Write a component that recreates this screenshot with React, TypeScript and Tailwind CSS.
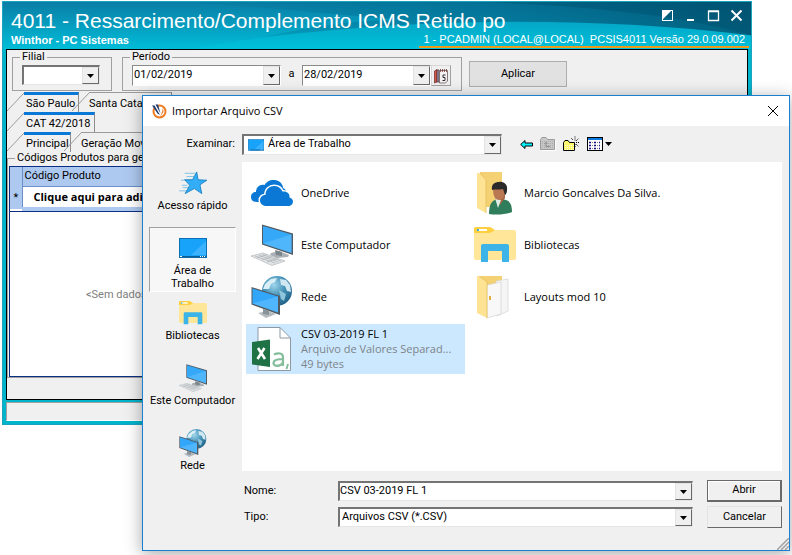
import React, { useState } from "react";
import clsx from "clsx";

type IconProps = { className?: string };

const StarIcon = ({ className }: IconProps) => (
  <svg viewBox="0 0 32 26" className={className} aria-hidden="true">
    <g stroke="#6bb9e4" strokeWidth="0.9">
      <path d="M7 2.500h11M9 6h8M3 10h10M5 18h6M1 21.500h9M4 15.500h6" />
    </g>
    <path
      d="M20 1 L21.500 9.500 L31 10 L23.500 15 L25.500 24.500 L17.500 19 L7.500 24.500 L12.500 15.500 L7 9.500 L15.500 9.500 Z"
      fill="#33adf5"
      stroke="#1a83c6"
      strokeWidth="1"
    />
  </svg>
);

const DesktopIcon = ({ className }: IconProps) => (
  <svg viewBox="0 0 28 20" className={className} aria-hidden="true">
    <rect x="0.5" y="0.5" width="27" height="19" fill="#18a3fb" stroke="#0c6fb4" />
    <path d="M12 17 L27 3 V17 Z" fill="#3bb2ff" />
    <path d="M1 18.500h26" stroke="#0d5d94" />
    <path d="M1 18.500h2M21 18.500h1M23 18.500h1M25 18.500h1" stroke="#fff" />
  </svg>
);

const LibraryIcon = ({ className }: IconProps) => (
  <svg viewBox="0 0 42 36" className={className} aria-hidden="true">
    <path d="M0 2 q0-2 2-2 H16 L20 3 H40 q2 0 2 2 V31 q0 2-2 2 H2 q-2 0-2-2 Z" fill="#ffe699" />
    <path d="M0 6 V2 q0-2 2-2 H16 L21 3 L16 6 Z" fill="#ffcf40" />
    <rect x="3" y="2" width="10" height="2" fill="#fff" />
    <rect x="3" y="2" width="2" height="2" fill="#35b3e8" />
    <path d="M7 35 V19 q0-2 2-2 H33 q2 0 2 2 V35 H28 V24 H14 V35 Z" fill="#3cb4e7" />
  </svg>
);

const ComputerIcon = ({ className }: IconProps) => (
  <svg viewBox="0 0 44 42" className={className} aria-hidden="true">
    <path d="M21 29 L29 27 L39 31 L38 33 L27 34 L20 31 Z" fill="#aab0b5" />
    <path d="M25 26 L32 28 V32 L26 31 Z" fill="#7b858c" />
    <path d="M12 0.500 L43 9.500 V31 L12 20.500 Z" fill="#525b63" />
    <path d="M13 2 L41.500 10.500 V29 L13 19.500 Z" fill="#35a9f8" />
    <path d="M13 19.500 L41.500 10.500 V29 Z" fill="#62c0ff" opacity="0.6" />
    <path d="M1 32 L13 29 L35 37 L22 41.500 Z" fill="#e2e5e7" stroke="#b4b8bb" strokeWidth="0.7" />
    <path
      d="M5 32 L25 39 M8.500 31 L28 38 M12 30.500 L31 37 M7 34 L17 30.500 M12 36 L22 32.500 M17 38 L27 34.500"
      stroke="#b2b6ba"
      strokeWidth="0.8"
    />
  </svg>
);

const NetworkIcon = ({ className }: IconProps) => (
  <svg viewBox="0 0 42 42" className={className} aria-hidden="true">
    <defs>
      <radialGradient id="globe" cx="0.4" cy="0.3" r="0.75">
        <stop offset="0" stopColor="#9fd6ec" />
        <stop offset="0.5" stopColor="#4390b5" />
        <stop offset="1" stopColor="#1f5e84" />
      </radialGradient>
    </defs>
    <circle cx="26" cy="15" r="15" fill="url(#globe)" />
    <path d="M14 8 L20 3 L26 2 L24 6 L20 8 L18 13 L12 13 Z" fill="#d9eef5" />
    <path d="M29 3 L35 4 L39 9 L40 16 L36 15 L34 10 L30 9 Z" fill="#cfe8f1" />
    <path d="M28 14 L35 18 L33 25 L30 23 Z" fill="#8fc5da" />
    <path d="M7 37 L17 35 L25 38 L15 42 Z" fill="#b4babf" />
    <path d="M12 33 L18 35 V39 L12 38 Z" fill="#89939a" />
    <path d="M0.500 11 L29 20 V39 L0.500 28.500 Z" fill="#525b63" />
    <path d="M1.500 12.500 L27 20.500 V36.500 L1.500 27.500 Z" fill="#32a6f8" />
    <path d="M1.500 27.500 L27 20.500 V36.500 Z" fill="#63c0ff" opacity="0.6" />
  </svg>
);

const OneDriveIcon = ({ className }: IconProps) => (
  <svg viewBox="0 0 42 26" className={className} aria-hidden="true">
    <path
      d="M6 22 C2 22 0 20 0 17 C0 14 2 12 5 12 C5 7 9 4 13.500 5 C16 0 24 -2 29 2 C31 4 32 6 32 8 C36 10 37 13 37 18 L12 22 Z"
      fill="#0a78d4"
    />
    <path
      d="M16 26 C12 26 9 24 9 20.500 C9 17 11.500 15 14.500 15 C14.500 9 19 6 23 6 C27 6 30 8 31.500 11.500 C36 11 39 13.500 38.500 17.500 C41 18 42 20 42 21.500 C42 24 40 26 37.500 26 Z"
      fill="#0a78d4"
      stroke="#fff"
      strokeWidth="3"
      paintOrder="stroke"
    />
  </svg>
);

const UserFolderIcon = ({ className }: IconProps) => (
  <svg viewBox="0 0 36 43" className={className} aria-hidden="true">
    <path d="M3 0 H25 V35 H3 Z" fill="#f4d273" />
    <path d="M0 1 H2 L9 7 V41 L0 36 Z" fill="#ffe394" />
    <path d="M9 41 V8 L3 1" stroke="#e5bf58" strokeWidth="0.8" fill="none" />
    <path d="M12 42 C12 32 15 27 23 27 C31 27 35 30 35 40 C29 43 18 43 12 42 Z" fill="#2f7d5b" />
    <path d="M18 27 L23 33 L28 26 V21 H18 Z" fill="#a76543" />
    <path d="M18 26 L21 36 L24 28 Z" fill="#dceee6" />
    <path d="M16 16 C16 12 28 12 28 17 C28 24 26 28 22 28 C18 28 16 24 16 16 Z" fill="#b97852" />
    <path d="M15 18 C14 12 18 10 22 10 C27 9 31 13 30 18 C30 22 28 23 28 23 L26 17 C22 18 18 17 15 18 Z" fill="#2b2a2a" />
  </svg>
);

const FolderIcon = ({ className }: IconProps) => (
  <svg viewBox="0 0 36 43" className={className} aria-hidden="true">
    <path d="M3 0 H25 V36 H3 Z" fill="#f4d273" />
    <path d="M19 5 L31 3 V35 L20 40 Z" fill="#f5f5f5" stroke="#cfcfcf" strokeWidth="0.6" />
    <path d="M10 9 L24 6 V38 L10 42 Z" fill="#f8f8f8" stroke="#cfcfcf" strokeWidth="0.6" />
    <path d="M0 0 H2 L10 6 V42 L0 37 Z" fill="#ffe394" />
    <path d="M10 42 V6 L2 0" stroke="#e5bf58" strokeWidth="0.8" fill="none" />
    <rect x="12" y="20" width="2" height="4" fill="#e0b13c" />
  </svg>
);

const CsvIcon = ({ className }: IconProps) => (
  <svg viewBox="0 0 40 45" className={className} aria-hidden="true">
    <path d="M6 0.500 H28 L38.500 11 V43.500 H6 Z" fill="#fff" stroke="#8e99a6" />
    <path d="M28 0.500 V11 H38.500" fill="none" stroke="#8e99a6" />
    <path d="M0 15 L18 12.500 V40 L0 37.500 Z" fill="#1f7246" />
    <path d="M6 21 L13 32 M12.500 21 L5.500 32" stroke="#fff" strokeWidth="2.600" />
    <path
      d="M22 27.500 C26 25.500 31 26 31 30 V39 M31 32 C25 32 21.500 33 21.500 36 C21.500 40 28 40 31 35.500"
      fill="none"
      stroke="#83bd9b"
      strokeWidth="2.200"
    />
    <path d="M36 37 L34.500 42" stroke="#83bd9b" strokeWidth="2" />
  </svg>
);

const CalendarIcon = () => (
  <svg viewBox="0 0 16 16" className="size-4" aria-hidden="true">
    <path d="M1.500 3 L4 1.500 V14 L1.500 15 Z" fill="#d0574a" stroke="#6b2626" strokeWidth="0.7" />
    <path d="M4 2 H6 V14 H4 Z" fill="#7d9fb8" stroke="#6b2626" strokeWidth="0.7" />
    <path d="M6.500 2.500 H14.500 V13 L12.500 15 H6.500 Z" fill="#f6f1f1" stroke="#6a5a5a" strokeWidth="0.8" />
    <path d="M7.500 1v3M9.500 1v3M11.500 1v3M13.500 1v3" stroke="#7a3a3a" strokeWidth="0.8" />
    <path d="M12.500 7 H10 V9.500 H12 V12.500 H9.500" fill="none" stroke="#2f2f3a" />
  </svg>
);

const AppLogo = () => (
  <svg viewBox="0 0 16 16" className="size-4" aria-hidden="true">
    <circle cx="8.500" cy="8.500" r="6" fill="#fff" stroke="#ec7d23" strokeWidth="2" />
    <path d="M0 1 L6 1.500 L9.500 12 L7.500 11 Z" fill="#fff" />
    <path d="M1 2.500 L3.500 2.500 L9 12 L6.500 10.500 Z" fill="#1f3b73" />
    <path d="M4.500 1.500 L7 1.500 L9.500 10.500 Z" fill="#1f3b73" />
    <path d="M9 14 L11 9 L12 4.500 L12.500 9 Z" fill="#ec7d23" />
  </svg>
);

const BackIcon = () => (
  <svg viewBox="0 0 13 11" className="h-[11px] w-[13px]" aria-hidden="true">
    <path d="M0.700 5.500 L5 1.500 V4 H12.500 V7 H5 V9.500 Z" fill="#00f5ff" stroke="#000" />
  </svg>
);

const UpFolderIcon = () => (
  <svg viewBox="0 0 16 14" className="h-3.5 w-4" aria-hidden="true">
    <path d="M1.500 13.500 H15.500 V3" fill="none" stroke="#fff" />
    <path d="M0.500 12.500 V2.500 L2 0.500 H6 L7.500 2.500 H14.500 V12.500 Z" fill="#c8c8c8" stroke="#9a9a9a" />
    <path d="M2 4.500h11M2 6.500h11M2 8.500h11M2 10.500h11" stroke="#a8a8a8" strokeDasharray="1 1" />
    <path d="M6 9.500 V5 M4.500 7 L6 5.500 L7.500 7 M6 9.500 H10" fill="none" stroke="#909090" />
  </svg>
);

const NewFolderIcon = () => (
  <svg viewBox="0 0 17 16" className="h-4 w-[17px]" aria-hidden="true">
    <path d="M0.500 14.500 V6.500 L2 4.500 H5 L6.500 6.500 H11.500 V14.500 Z" fill="#fdf76b" stroke="#000" />
    <path d="M2 13.500h9M2 11.500h9M2 9.500h9" stroke="#fffde0" strokeDasharray="1 1" />
    <path d="M12 4.500 V0 M13 5 L16 2 M13 6.500 H16 M10 4 L8 2 M13 8 L16 11 M12 8v3" stroke="#000" strokeDasharray="1 1" />
  </svg>
);

const ViewIcon = () => (
  <svg viewBox="0 0 16 14" className="h-3.5 w-4" aria-hidden="true">
    <rect x="0.500" y="0.500" width="15" height="13" fill="#fff" stroke="#000" />
    <rect x="1" y="1" width="14" height="2" fill="#0a7be0" />
    <path
      d="M2 5.500h2M2 8.500h2M2 11.500h2M7 5.500h2M7 8.500h2M7 11.500h2M12 5.500h1M12 8.500h1M12 11.500h1"
      stroke="#101080"
      strokeWidth="1.500"
    />
    <path d="M5 5.500h1M5 8.500h1M5 11.500h1M10 5.500h1M10 8.500h1M10 11.500h1" stroke="#888" />
  </svg>
);

const Arrow = () => (
  <svg viewBox="0 0 7 4" className="h-1 w-[7px]" aria-hidden="true">
    <path d="M0 0 H7 L3.500 4 Z" fill="#000" />
  </svg>
);

const ArrowBox = () => (
  <span className="pointer-events-none flex w-[17px] shrink-0 items-center justify-center border border-t-[#e3e3e3] border-r-[#696969] border-b-[#696969] border-l-[#e3e3e3] bg-[#f0f0f0]">
    <Arrow />
  </span>
);

const sunken =
  "flex border border-t-[#8a8a8a] border-r-white border-b-white border-l-[#8a8a8a] bg-white";
const sunkenDeep =
  "flex border-2 border-r border-b border-t-[#747474] border-r-[#e6e6e6] border-b-[#e6e6e6] border-l-[#747474] bg-white";

interface DateFieldProps {
  label: string;
  value: string;
  onChange: (value: string) => void;
  className?: string;
}

const DateField: React.FC<DateFieldProps> = ({ label, value, onChange, className }) => (
  <div className={clsx(sunken, "h-[21px]", className)}>
    <input
      type="text"
      aria-label={label}
      value={value}
      onChange={(e) => onChange(e.target.value)}
      className="w-0 flex-1 px-px outline-none"
    />
    <ArrowBox />
  </div>
);

interface TabProps {
  label: string;
  active?: boolean;
  className?: string;
}

const Tab: React.FC<TabProps> = ({ label, active, className }) => (
  <button type="button" role="tab" aria-selected={!!active} className={clsx("flex h-5", className)}>
    <svg viewBox="0 0 17 20" className="h-5 w-[17px] shrink-0" aria-hidden="true">
      <path d="M0 19 L17 1" stroke="#9a9a9a" fill="none" />
    </svg>
    <span
      className={clsx(
        "h-5 flex-1 overflow-hidden border-r border-[#8c8c8c] text-left leading-[17px] whitespace-nowrap",
        active ? "border-t-3 border-t-[#0a78d7] pl-0.5" : "border-t border-t-[#9a9a9a] pt-0.5"
      )}
    >
      {label}
    </span>
  </button>
);

const places = [
  { label: "Acesso rápido", icon: <StarIcon className="h-6 w-[30px]" /> },
  { label: "Área de Trabalho", icon: <DesktopIcon className="h-5 w-7" />, selected: true },
  { label: "Bibliotecas", icon: <LibraryIcon className="h-6 w-7" /> },
  { label: "Este Computador", icon: <ComputerIcon className="h-7 w-8" /> },
  { label: "Rede", icon: <NetworkIcon className="h-7 w-7" /> },
];

const files = [
  { name: "OneDrive", icon: <OneDriveIcon className="h-[26px] w-[42px]" /> },
  { name: "Marcio Goncalves Da Silva.", icon: <UserFolderIcon className="h-[43px] w-9" /> },
  { name: "Este Computador", icon: <ComputerIcon className="h-[42px] w-11" /> },
  { name: "Bibliotecas", icon: <LibraryIcon className="h-9 w-[42px]" /> },
  { name: "Rede", icon: <NetworkIcon className="h-[42px] w-[42px]" /> },
  { name: "Layouts mod 10", icon: <FolderIcon className="h-[43px] w-9" /> },
  {
    name: "CSV 03-2019 FL 1",
    details: ["Arquivo de Valores Separad...", "49 bytes"],
    icon: <CsvIcon className="h-[45px] w-10" />,
  },
];

const TitleBar = () => (
  <header className="relative h-[47px] overflow-hidden bg-linear-to-b from-[#0a7ea6] to-[#00bdd8] text-white">
    <svg viewBox="0 0 750 48" preserveAspectRatio="none" className="absolute inset-0 h-full w-full" aria-hidden="true">
      <defs>
        <linearGradient id="dark" x1="0" y1="0" x2="1" y2="0">
          <stop offset="0" stopColor="#00698c" stopOpacity="0" />
          <stop offset="0.4" stopColor="#006a8e" stopOpacity="0.45" />
          <stop offset="1" stopColor="#004a68" stopOpacity="0.75" />
        </linearGradient>
      </defs>
      <path d="M190 48 C260 34 340 26 430 22 C540 17 660 22 750 34 V48 Z" fill="#00cbe0" opacity="0.3" />
      <path d="M150 0 H750 V34 C640 20 520 18 430 22 C400 23 330 28 260 36 C310 24 360 18 400 18 C320 12 240 2 150 0 Z" fill="url(#dark)" />
      <path d="M480 0 C590 4 680 14 750 34 V0 Z" fill="#004a68" opacity="0.35" />
    </svg>
    <div className="relative flex justify-between pl-2">
      <div className="min-w-0 font-['Liberation_Sans',sans-serif]">
        <h1 className="pt-1.5 text-[21px] leading-[26px] whitespace-nowrap">
          4011 - Ressarcimento/Complemento ICMS Retido po
        </h1>
        <p className="text-[11px] leading-3 font-bold">Winthor - PC Sistemas</p>
      </div>
      <div className="flex items-start gap-2.5 pt-[7px] pr-2">
        <button type="button" aria-label="Alternar" className="size-[13px]">
          <svg viewBox="0 0 13 13" className="size-[13px]">
            <rect x="1.500" y="1.500" width="10" height="10" fill="none" stroke="#fff" />
            <path d="M1 12 V11 L11 1 H1 Z" fill="#fff" />
          </svg>
        </button>
        <button type="button" aria-label="Minimizar" className="size-[13px]">
          <svg viewBox="0 0 13 13" className="size-[13px]">
            <path d="M3 11 H10" stroke="#fff" strokeWidth="2" />
          </svg>
        </button>
        <button type="button" aria-label="Maximizar" className="size-[13px]">
          <svg viewBox="0 0 13 13" className="size-[13px]">
            <path d="M1.500 2.500 H11.500 V11.500 H1.500 Z M1 2 H12" fill="none" stroke="#fff" strokeWidth="1.300" />
          </svg>
        </button>
        <button type="button" aria-label="Fechar" className="size-[13px]">
          <svg viewBox="0 0 13 13" className="size-[13px]">
            <path d="M1.500 1.500 L11.500 11.500 M11.500 1.500 L1.500 11.500" stroke="#fff" strokeWidth="2" />
          </svg>
        </button>
      </div>
    </div>
    <p className="absolute right-0.5 bottom-px border-b-2 border-[#f09a1a] pr-1 pl-1 font-['Liberation_Sans',sans-serif] text-[11px] leading-[13px] whitespace-pre">
      {"1 - PCADMIN (LOCAL@LOCAL)  PCSIS4011 Versão 29.0.09.002"}
    </p>
  </header>
);

const MainWindow: React.FC = () => {
  const [start, setStart] = useState("01/02/2019");
  const [end, setEnd] = useState("28/02/2019");

  return (
    <div className="mr-10 ml-0.5 border border-[#1aa5bd] bg-[#00b4cc] text-[11px]">
      <TitleBar />
      <div className="mx-[3px] border border-black bg-[#f0f0f0]">
        <div className="flex h-[41px] items-start pt-px pl-[5px]">
          <fieldset className="h-10 w-[100px] border border-[#a0a0a0] px-[9px]">
            <legend className="-ml-0.5 px-0.5 leading-3">
              <label htmlFor="filial">Filial</label>
            </legend>
            <div className={clsx(sunkenDeep, "mt-0.5 mr-0.5 h-5")}>
              <select id="filial" className="w-0 flex-1 appearance-none outline-none">
                <option></option>
              </select>
              <ArrowBox />
            </div>
          </fieldset>
          <fieldset className="ml-2.5 h-10 w-[340px] border border-[#a0a0a0] px-[9px]">
            <legend className="-ml-0.5 px-0.5 leading-3">Período</legend>
            <div className="mt-0.5 flex items-center">
              <DateField label="Data inicial" value={start} onChange={setStart} className="w-[149px]" />
              <span className="w-[21px] pb-1 text-center leading-3">a</span>
              <DateField label="Data final" value={end} onChange={setEnd} className="w-[129px]" />
              <button
                type="button"
                aria-label="Calendário"
                className="flex h-[21px] w-5 items-center justify-center border border-[#d8d8d8] border-r-[#a0a0a0] border-b-[#a0a0a0]"
              >
                <CalendarIcon />
              </button>
            </div>
          </fieldset>
          <button
            type="button"
            className="mt-2.5 ml-[7px] h-[26px] w-[98px] border border-[#adadad] bg-[#e1e1e1]"
          >
            Aplicar
          </button>
        </div>
        <div role="tablist" className="flex pt-px">
          <Tab label="São Paulo" active className="w-[72px]" />
          <Tab label="Santa Catarina" className="-ml-[7px] w-[100px]" />
        </div>
        <div role="tablist" className="flex">
          <Tab label="CAT 42/2018" active className="w-[88px]" />
        </div>
        <div role="tablist" className="flex">
          <Tab label="Principal" active className="w-16" />
          <Tab label="Geração Movimento" className="-ml-[7px] w-[130px]" />
        </div>
        <fieldset className="h-[226px] min-w-0 border border-[#a0a0a0] px-px">
          <legend className="ml-1.5 px-0.5 leading-3">Códigos Produtos para geração</legend>
          <div className="mt-0.5 flex h-[211px] flex-col border border-[#0c2f86] bg-white">
            <table className="w-full border-collapse text-left">
              <thead>
                <tr className="h-[19px] bg-[#aec9f0]">
                  <th className="w-3 border-r border-[#6d8fc8]"></th>
                  <th className="border-b border-[#6d8fc8] pl-0.5 font-normal">Código Produto</th>
                </tr>
              </thead>
              <tbody>
                <tr className="h-[23px]">
                  <td className="border-r border-[#6d8fc8] bg-[#aec9f0] text-center leading-3">*</td>
                  <td className="border-b-4 border-[#aec9f0] pl-[11px] font-['Open_Sans',sans-serif] leading-[18px] font-bold whitespace-nowrap">
                    Clique aqui para adicionar
                  </td>
                </tr>
              </tbody>
            </table>
            <div className="border-t border-[#0c2f86]"></div>
            <p className="pt-[75px] pl-[76px] leading-4 text-[#808080]">&lt;Sem dados para exibir&gt;</p>
          </div>
        </fieldset>
        <div className="h-[21px]"></div>
      </div>
      <div className="mx-[3px] mt-0.5 mb-[3px] h-[19px] border border-t-[#a0a0a0] border-r-white border-b-white border-l-[#a0a0a0] bg-[#f0f0f0]"></div>
    </div>
  );
};

const ImportDialog: React.FC = () => {
  const [fileName, setFileName] = useState("CSV 03-2019 FL 1");
  const [selected, setSelected] = useState("CSV 03-2019 FL 1");

  return (
    <section
      role="dialog"
      aria-label="Importar Arquivo CSV"
      className="absolute top-[95px] right-0.5 left-[142px] border border-[#1a7fd0] bg-[#f0f0f0] text-[11px] shadow-[0_3px_16px_rgba(0,0,0,0.35)]"
    >
      <div className="flex h-[30px] items-center gap-[5px] bg-white pr-2.5 pl-2 font-['Open_Sans',sans-serif]">
        <AppLogo />
        <h2 className="flex-1">Importar Arquivo CSV</h2>
        <button type="button" aria-label="Fechar">
          <svg viewBox="0 0 12 12" className="size-3">
            <path d="M1 1 L11 11 M11 1 L1 11" stroke="#000" />
          </svg>
        </button>
      </div>
      <div className="flex h-9 items-center">
        <label htmlFor="look-in" className="w-[99px] pr-[7px] text-right">
          Examinar:
        </label>
        <div className={clsx(sunkenDeep, "h-[21px] w-[260px] items-stretch")}>
          <span className="flex items-center pl-1">
            <DesktopIcon className="h-3 w-4" />
          </span>
          <select id="look-in" className="w-0 flex-1 appearance-none pl-1 outline-none">
            <option>Área de Trabalho</option>
          </select>
          <ArrowBox />
        </div>
        <div className="flex items-center gap-[7px] pl-[18px]">
          <button type="button" aria-label="Voltar">
            <BackIcon />
          </button>
          <button type="button" aria-label="Um nível acima">
            <UpFolderIcon />
          </button>
          <button type="button" aria-label="Nova pasta">
            <NewFolderIcon />
          </button>
          <button type="button" aria-label="Exibir" className="flex items-center gap-0.5">
            <ViewIcon />
            <Arrow />
          </button>
        </div>
      </div>
      <div className="flex">
        <nav className="w-[99px] shrink-0 pl-1.5">
          {places.map((place) => (
            <button
              key={place.label}
              type="button"
              className={clsx(
                "flex h-[65px] w-[87px] flex-col items-center border pt-[3px] leading-[13px]",
                place.selected
                  ? "border-t-[#a0a0a0] border-r-white border-b-white border-l-[#a0a0a0] bg-[#f7f7f7] px-4"
                  : "border-transparent"
              )}
            >
              <span className="flex h-[33px] shrink-0 items-center">{place.icon}</span>
              <span className={place.selected ? "" : "whitespace-nowrap"}>{place.label}</span>
            </button>
          ))}
        </nav>
        <div className="mr-[7px] min-w-0 flex-1">
          <ul className="grid h-[309px] grid-cols-[repeat(2,219px)] content-start gap-x-1 gap-y-0.5 bg-white pt-1.5 pl-1 font-['Open_Sans',sans-serif] leading-[15px]">
            {files.map((file) => (
              <li key={file.name}>
                <button
                  type="button"
                  onClick={() => setSelected(file.name)}
                  className={clsx(
                    "flex h-[50px] w-full items-center gap-[5px] pl-0.5 text-left",
                    selected === file.name && "bg-[#cce8ff]"
                  )}
                >
                  <span className="flex w-12 shrink-0 justify-center">{file.icon}</span>
                  <span className="pb-0.5 whitespace-nowrap">
                    {file.name}
                    {file.details?.map((line) => (
                      <span key={line} className="block text-[#7d8489]">
                        {line}
                      </span>
                    ))}
                  </span>
                </button>
              </li>
            ))}
          </ul>
          <div className="grid grid-cols-[96px_1fr_75px] items-center gap-y-1 pt-[9px] pb-[22px]">
            <label htmlFor="file-name" className="pl-0.5">
              Nome:
            </label>
            <div className={clsx(sunkenDeep, "mr-3.5 h-5")}>
              <input
                id="file-name"
                type="text"
                value={fileName}
                onChange={(e) => setFileName(e.target.value)}
                className="w-0 flex-1 outline-none"
              />
              <ArrowBox />
            </div>
            <button
              type="button"
              className="h-[22px] border border-r-2 border-b-2 border-[#696969] shadow-[inset_1px_1px_0_#fff]"
            >
              Abrir
            </button>
            <label htmlFor="file-type" className="pl-0.5">
              Tipo:
            </label>
            <div className={clsx(sunkenDeep, "mr-3.5 h-5")}>
              <select id="file-type" className="w-0 flex-1 appearance-none pl-0.5 outline-none">
                <option>Arquivos CSV (*.CSV)</option>
              </select>
              <ArrowBox />
            </div>
            <button
              type="button"
              className="h-[22px] border border-t-[#e3e3e3] border-r-[#696969] border-b-[#696969] border-l-[#e3e3e3]"
            >
              Cancelar
            </button>
          </div>
        </div>
      </div>
      <svg viewBox="0 0 12 12" className="absolute right-0 bottom-0 size-3" aria-hidden="true">
        <path d="M0 12 L12 0 M4 12 L12 4 M8 12 L12 8" stroke="#a0a0a0" strokeWidth="1.500" />
      </svg>
    </section>
  );
};

const App: React.FC = () => {
  return (
    <main className="relative min-h-screen overflow-hidden bg-white pt-px font-['Roboto',sans-serif] text-black">
      <MainWindow />
      <ImportDialog />
    </main>
  );
};

export default App;
